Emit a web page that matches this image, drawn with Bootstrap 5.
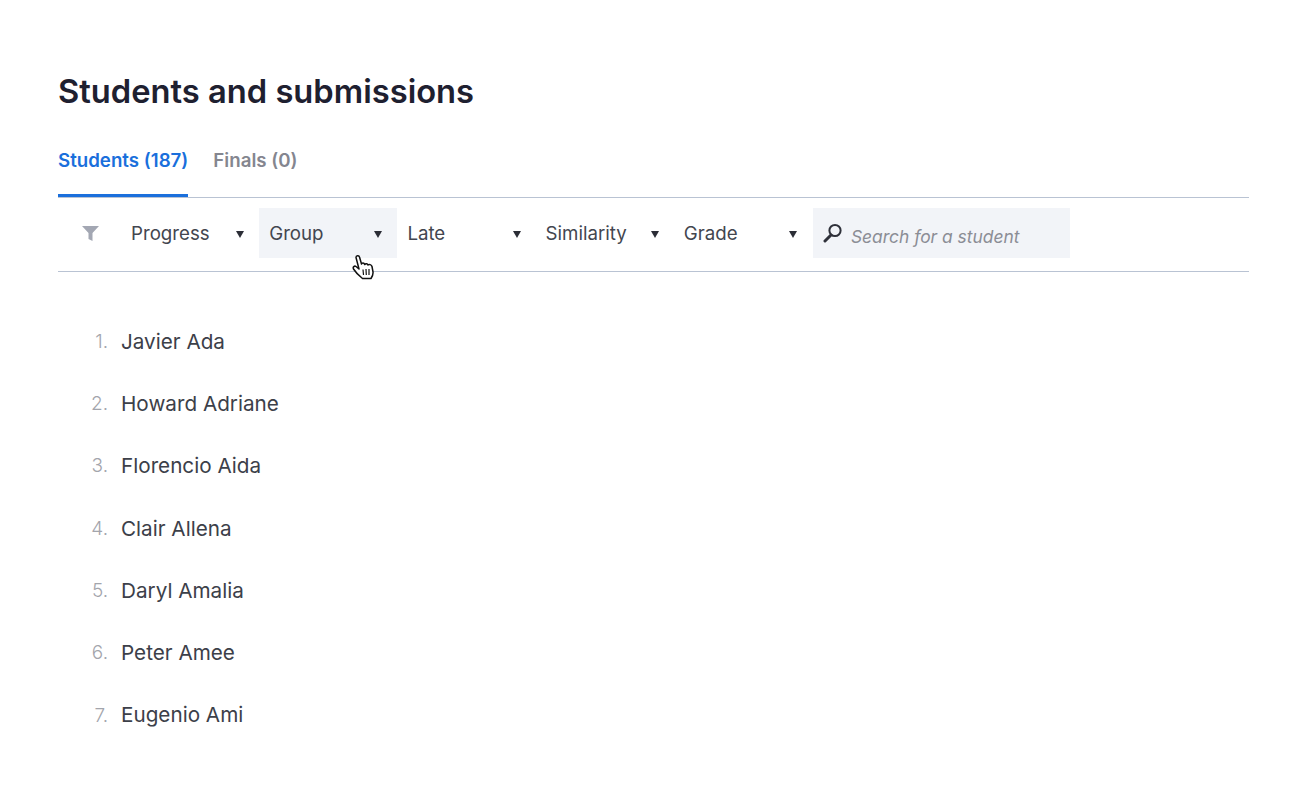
<!DOCTYPE html>
<html lang="en">
<head>
    <meta charset="UTF-8">
    <meta name="viewport" content="width=device-width, initial-scale=1.0">
    <title>Students and submissions</title>
    <link rel="stylesheet" href="https://cdn.jsdelivr.net/npm/bootstrap@5.3.0/dist/css/bootstrap.min.css">
    <style>
        body { font-family: "Inter", "Liberation Sans", sans-serif; color: #3c4049; background: #fff; }
        .page-wrap { padding: 69px 51px 0 58px; }
        .page-title { font-size: 32.7px; line-height: 44px; font-weight: 600; color: #1e2030; margin: 0 0 35px; }
        .tab-row { border-bottom: 1px solid #b9c3d3; gap: 25px; height: 50px; }
        .tab-link { font-size: 18.7px; line-height: 26px; font-weight: 600; color: #84868f; height: 49px; text-decoration: none; }
        .tab-link.active { color: #1a6fdc; border-bottom: 3px solid #1a6fdc; }
        .filter-row { border-bottom: 1px solid #b9c3d3; padding: 10px 0 13px; position: relative; height: 74px; }
        .filter-icon { width: 63px; padding-left: 24px; }
        .filter-cell { width: 138.2px; height: 50px; padding: 3px 10px 0; font-size: 18.7px; color: #43464f; }
        .filter-cell.hovered { background: #f2f4f8; }
        .caret-down { width: 0; height: 0; border-left: 4px solid transparent; border-right: 4px solid transparent; border-top: 7px solid #2b2d36; margin-right: 5px; }
        .search-box { width: 257px; height: 50px; background: #f2f4f8; padding: 0 10px; margin-left: 1px; }
        .search-text { font-size: 17.4px; font-style: italic; color: #8b8d95; margin-top: 8px; }
        .hand-cursor { position: absolute; left: 294px; top: 56px; }
        .student-list { list-style: none; margin: 38px 0 0; padding: 0; }
        .student-row { height: 62.3px; font-size: 20.7px; color: #3c4049; }
        .row-num { width: 50px; text-align: right; margin-right: 13px; font-size: 19px; font-weight: 300; color: #a3a5ac; padding-top: 2px; }
    </style>
</head>
<body>
    <div class="page-wrap">
        <h1 class="page-title">Students and submissions</h1>

        <!-- Tabs -->
        <div class="tab-row d-flex">
            <a class="tab-link active" href="#">Students (187)</a>
            <a class="tab-link" href="#">Finals (0)</a>
        </div>

        <!-- Filters -->
        <div class="filter-row d-flex align-items-center">
            <div class="filter-icon">
                <svg class="d-block" width="17" height="15" viewBox="0 0 17 15"><path d="M0 0H17L10.500 7V15L6.500 13V7Z" fill="#a3a7b3"/></svg>
            </div>
            <div class="filter-cell d-flex align-items-center justify-content-between">Progress <span class="caret-down"></span></div>
            <div class="filter-cell hovered d-flex align-items-center justify-content-between">Group <span class="caret-down"></span></div>
            <div class="filter-cell d-flex align-items-center justify-content-between">Late <span class="caret-down"></span></div>
            <div class="filter-cell d-flex align-items-center justify-content-between">Similarity <span class="caret-down"></span></div>
            <div class="filter-cell d-flex align-items-center justify-content-between">Grade <span class="caret-down"></span></div>
            <div class="search-box d-flex align-items-center gap-2">
                <svg class="flex-shrink-0" width="20" height="20" viewBox="0 0 20 20" fill="none" stroke="#2f313a"><circle cx="12" cy="7.500" r="5.600" stroke-width="2"/><path d="M8 12 2 18" stroke-width="3" stroke-linecap="round"/></svg>
                <span class="search-text">Search for a student</span>
            </div>
            <svg class="hand-cursor" width="23" height="27" viewBox="0 0 23 27">
                <path d="M4 3.500C4 1.500 7 1 7.500 3L9.500 10C10 8.500 12 8.500 12.700 10.500C13.500 9.200 15.500 9.500 16 11C17 10 19.500 10.500 20 12.500L21 18C21.300 21 20 23 19 24.500H10.500C8 22.500 4 19 1.500 15C0.500 13 2.500 11.500 4 12.500L7 15Z" fill="#fff" stroke="#111" stroke-width="1.500" stroke-linejoin="round"/>
                <path d="M11 15.500 11.500 21M14 15 14.300 21M17 15 17 21" stroke="#111" stroke-width="1.200"/>
            </svg>
        </div>

        <!-- Student list -->
        <ol class="student-list" id="student-list"></ol>
    </div>

    <script src="https://cdn.jsdelivr.net/npm/bootstrap@5.3.0/dist/js/bootstrap.bundle.min.js"></script>
    <script>
        const students = ['Javier Ada', 'Howard Adriane', 'Florencio Aida', 'Clair Allena', 'Daryl Amalia', 'Peter Amee', 'Eugenio Ami'];
        const list = document.getElementById('student-list');

        students.forEach((name, i) => {
            list.innerHTML += `<li class="student-row d-flex align-items-center"><span class="row-num">${i + 1}.</span>${name}</li>`;
        });
    </script>
</body>
</html>
